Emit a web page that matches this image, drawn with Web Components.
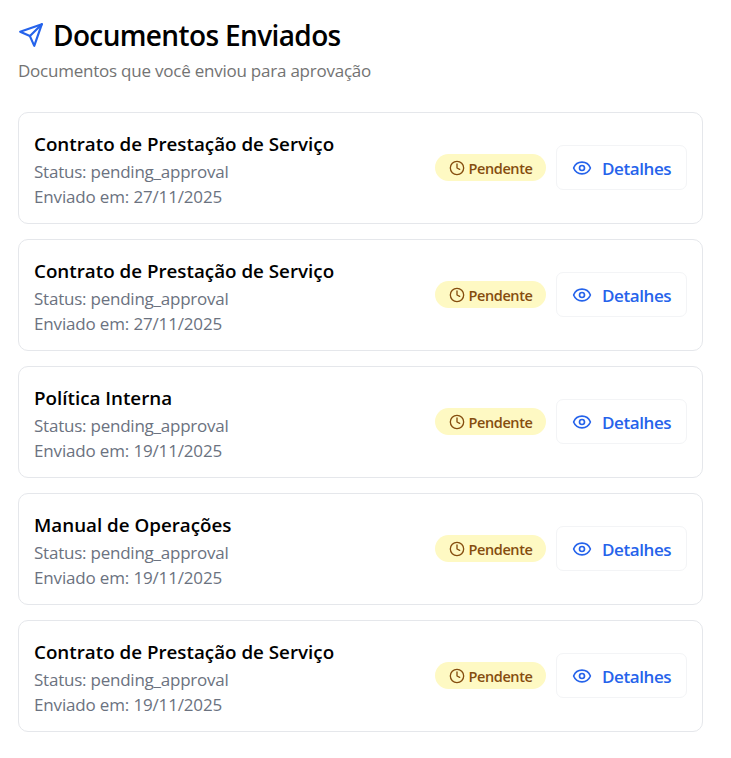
<!DOCTYPE html>
<html lang="pt-BR">
<head>
<meta charset="utf-8">
<title>Documentos Enviados</title>
<style>
    body {
        margin: 0;
        background: #fff;
        color: #000;
        font-family: "Open Sans", "Noto Sans", sans-serif;
    }
</style>
</head>
<body>
<sent-documents></sent-documents>
<script>
const icons = {
    send: '<path d="m22 2-7 20-4-9-9-4Z"/><path d="M22 2 11 13"/>',
    clock: '<circle cx="12" cy="12" r="10"/><path d="M12 6v6l4 2"/>',
    eye: '<path d="M2.06 12.35a1 1 0 0 1 0-.7 10.75 10.75 0 0 1 19.88 0 1 1 0 0 1 0 .7 10.75 10.75 0 0 1-19.88 0"/><circle cx="12" cy="12" r="3"/>'
};

customElements.define('ui-icon',
    class extends HTMLElement {
        constructor() {
            super();
            this.attachShadow({ mode: 'open' });
        }
        connectedCallback() {
            this.shadowRoot.innerHTML = `<style>
    :host {
        display: block;
        flex: none;
        width: var(--icon-size, 20px);
        height: var(--icon-size, 20px);
    }
    svg {
        display: block;
        width: 100%;
        height: 100%;
    }
</style>
<svg viewBox="0 0 24 24" fill="none" stroke="currentColor" stroke-width="2" stroke-linecap="round" stroke-linejoin="round">${icons[this.getAttribute('name')]}</svg>`;
        }
    });

customElements.define('status-badge',
    class extends HTMLElement {
        constructor() {
            super();
            this.attachShadow({ mode: 'open' });
            this.shadowRoot.innerHTML = `<style>
    :host {
        display: flex;
        align-items: center;
        box-sizing: border-box;
        width: 111px;
        height: 27px;
        padding-left: 13.5px;
        gap: 4px;
        border-radius: 14px;
        background: #fef9c3;
        color: #854d0e;
        font-size: 14.5px;
        font-weight: 600;
        letter-spacing: -0.4px;
        line-height: 24px;
        white-space: nowrap;
        --icon-size: 16px;
    }
    span {
        padding-top: 3px;
    }
</style>
<ui-icon name="clock"></ui-icon>
<span><slot></slot></span>`;
        }
    });

customElements.define('details-button',
    class extends HTMLElement {
        constructor() {
            super();
            this.attachShadow({ mode: 'open' });
            this.shadowRoot.innerHTML = `<style>
    :host {
        display: block;
    }
    button {
        display: flex;
        align-items: center;
        box-sizing: border-box;
        width: 131px;
        height: 45px;
        margin: 0;
        padding: 0 0 0 15px;
        gap: 10px;
        border: 1px solid #f3f4f6;
        border-radius: 7px;
        background: #fff;
        color: #2563eb;
        font: 600 17px/40px "Open Sans", "Noto Sans", sans-serif;
        letter-spacing: -0.4px;
        white-space: nowrap;
        --icon-size: 20px;
    }
    span {
        padding-top: 3px;
    }
</style>
<button type="button"><ui-icon name="eye"></ui-icon><span><slot></slot></span></button>`;
        }
    });

customElements.define('document-card',
    class extends HTMLElement {
        constructor() {
            super();
            this.attachShadow({ mode: 'open' });
            this.shadowRoot.innerHTML = `<style>
    :host {
        display: flex;
        align-items: flex-start;
        justify-content: space-between;
        box-sizing: border-box;
        height: 112px;
        padding: 0 15px;
        border: 1px solid #e5e7eb;
        border-radius: 10px;
        background: #fff;
    }
    h3, p {
        margin: 0;
        white-space: nowrap;
    }
    h3 {
        font-size: 18.8px;
        font-weight: 600;
        line-height: 30px;
    }
    p {
        color: #6b7280;
        font-size: 17px;
        letter-spacing: -0.23px;
        line-height: 25px;
    }
    p:last-child {
        letter-spacing: -0.16px;
    }
    .text {
        padding-top: 16px;
    }
    .actions {
        display: flex;
        align-items: center;
        padding-top: 32px;
        gap: 10px;
    }
</style>
<div class="text">
    <h3><slot name="title"></slot></h3>
    <p>Status: <slot name="status"></slot></p>
    <p>Enviado em: <slot name="date"></slot></p>
</div>
<div class="actions">
    <status-badge>Pendente</status-badge>
    <details-button>Detalhes</details-button>
</div>`;
        }
    });

const documents = [
    ['Contrato de Prestação de Serviço', '27/11/2025'],
    ['Contrato de Prestação de Serviço', '27/11/2025'],
    ['Política Interna', '19/11/2025'],
    ['Manual de Operações', '19/11/2025'],
    ['Contrato de Prestação de Serviço', '19/11/2025']
];

customElements.define('sent-documents',
    class extends HTMLElement {
        constructor() {
            super();
            this.attachShadow({ mode: 'open' });
            const cards = documents.map(([title, date]) => `<document-card>
    <span slot="title">${title}</span>
    <span slot="status">pending_approval</span>
    <span slot="date">${date}</span>
</document-card>`).join('');
            this.shadowRoot.innerHTML = `<style>
    :host {
        display: block;
        padding: 15px 28px 0 18px;
    }
    header {
        height: 97px;
    }
    h1 {
        display: flex;
        align-items: flex-start;
        gap: 9px;
        margin: 0;
        font-size: 28px;
        font-weight: 600;
        letter-spacing: -0.63px;
        line-height: 40px;
        white-space: nowrap;
    }
    ui-icon {
        --icon-size: 26px;
        margin-top: 7px;
        color: #2563eb;
    }
    p {
        margin: 3px 0 0;
        color: #737373;
        font-size: 17px;
        letter-spacing: -0.23px;
        line-height: 25px;
    }
    .list {
        display: grid;
        gap: 15px;
    }
</style>
<header>
    <h1><ui-icon name="send"></ui-icon><span>Documentos Enviados</span></h1>
    <p>Documentos que você enviou para aprovação</p>
</header>
<div class="list">${cards}</div>`;
        }
    });
</script>
</body>
</html>
